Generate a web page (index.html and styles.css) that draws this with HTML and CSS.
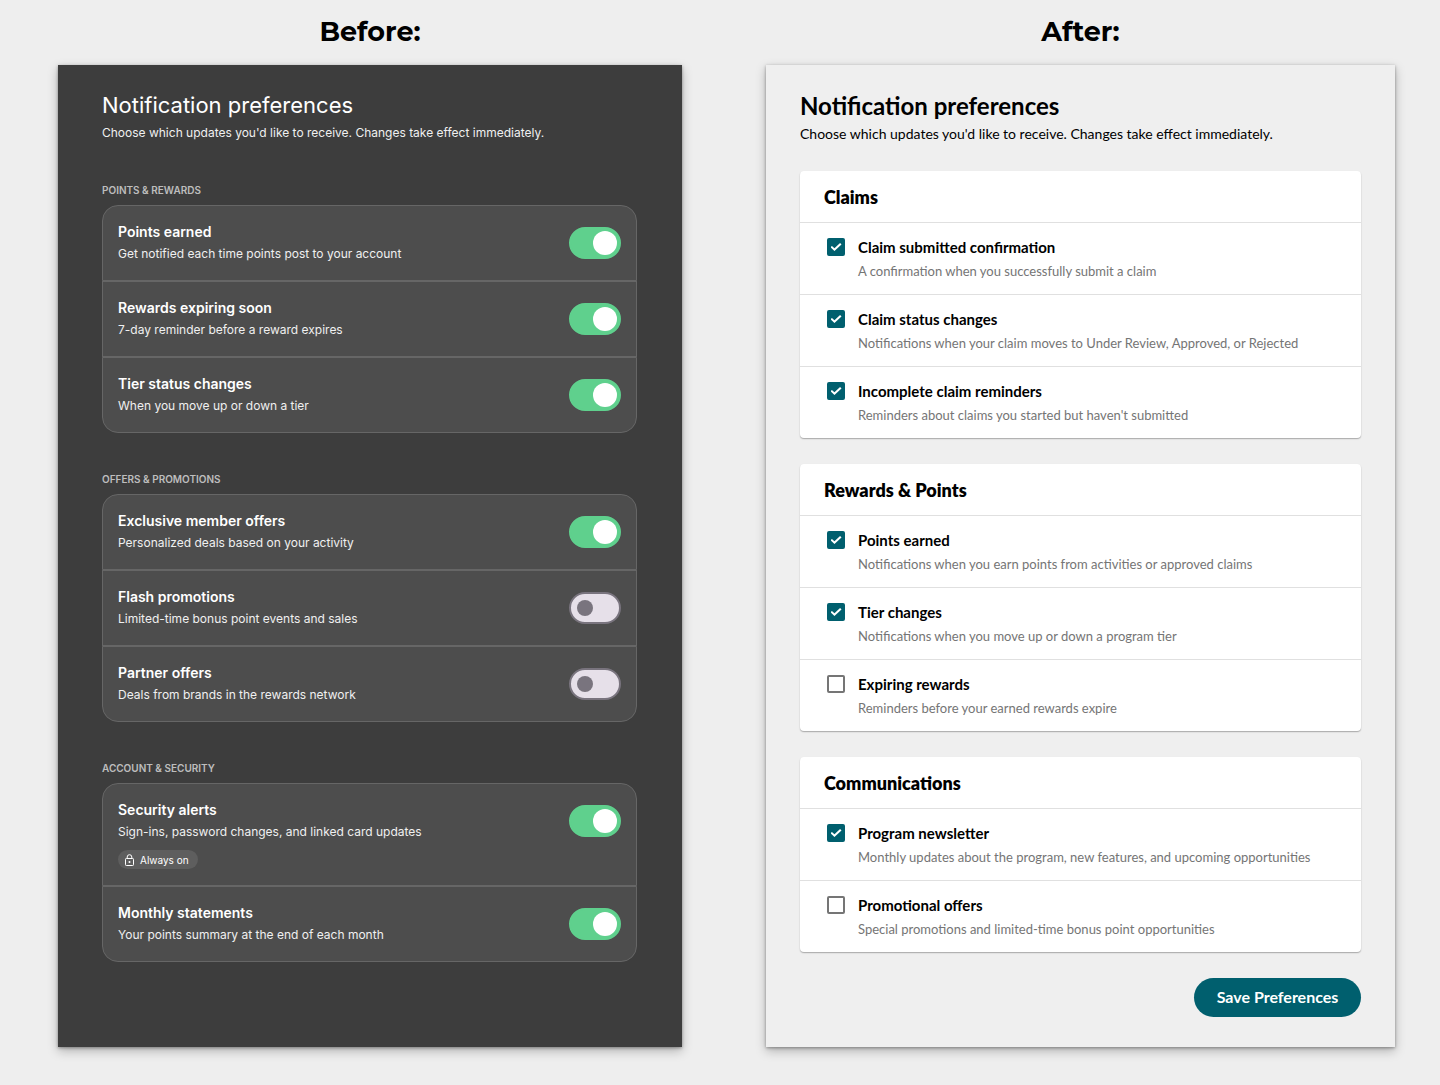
FILE: index.html
```html
<!DOCTYPE html>
<html lang="en">
<head>
  <meta charset="UTF-8">
  <meta name="viewport" content="width=device-width, initial-scale=1.0">
  <title>Notification preferences</title>
  <link rel="stylesheet" href="styles.css">
</head>
<body>
<main class="compare">
  <div class="column">
    <h1>Before:</h1>
    <section class="panel before">
      <h2>Notification preferences</h2>
      <p class="intro">Choose which updates you'd like to receive. Changes take effect immediately.</p>

      <h3>Points &amp; Rewards</h3>
      <div class="group">
        <div class="row">
          <div class="text">
            <label for="b-points">Points earned</label>
            <p>Get notified each time points post to your account</p>
          </div>
          <input type="checkbox" class="toggle" id="b-points" checked>
        </div>
        <div class="row">
          <div class="text">
            <label for="b-expiring">Rewards expiring soon</label>
            <p>7-day reminder before a reward expires</p>
          </div>
          <input type="checkbox" class="toggle" id="b-expiring" checked>
        </div>
        <div class="row">
          <div class="text">
            <label for="b-tier">Tier status changes</label>
            <p>When you move up or down a tier</p>
          </div>
          <input type="checkbox" class="toggle" id="b-tier" checked>
        </div>
      </div>

      <h3>Offers &amp; Promotions</h3>
      <div class="group">
        <div class="row">
          <div class="text">
            <label for="b-exclusive">Exclusive member offers</label>
            <p>Personalized deals based on your activity</p>
          </div>
          <input type="checkbox" class="toggle" id="b-exclusive" checked>
        </div>
        <div class="row">
          <div class="text">
            <label for="b-flash">Flash promotions</label>
            <p>Limited-time bonus point events and sales</p>
          </div>
          <input type="checkbox" class="toggle" id="b-flash">
        </div>
        <div class="row">
          <div class="text">
            <label for="b-partner">Partner offers</label>
            <p>Deals from brands in the rewards network</p>
          </div>
          <input type="checkbox" class="toggle" id="b-partner">
        </div>
      </div>

      <h3>Account &amp; Security</h3>
      <div class="group">
        <div class="row">
          <div class="text">
            <label for="b-security">Security alerts</label>
            <p>Sign-ins, password changes, and linked card updates</p>
            <span class="badge">
              <svg width="9" height="12" viewBox="0 0 9 12" fill="none" stroke="currentColor">
                <rect x="0.5" y="4.5" width="8" height="7" rx="0.8"/>
                <path d="M2.2 4.5V3a2.3 2.3 0 0 1 4.6 0v1.5"/>
                <circle cx="4.5" cy="8" r="1" fill="currentColor" stroke="none"/>
              </svg>
              Always on
            </span>
          </div>
          <input type="checkbox" class="toggle" id="b-security" checked>
        </div>
        <div class="row">
          <div class="text">
            <label for="b-monthly">Monthly statements</label>
            <p>Your points summary at the end of each month</p>
          </div>
          <input type="checkbox" class="toggle" id="b-monthly" checked>
        </div>
      </div>
    </section>
  </div>

  <div class="column">
    <h1>After:</h1>
    <form class="panel after">
      <h2>Notification preferences</h2>
      <p class="intro">Choose which updates you'd like to receive. Changes take effect immediately.</p>

      <section class="card">
        <h3>Claims</h3>
        <div class="option">
          <input type="checkbox" id="a-submitted" checked>
          <div class="text">
            <label for="a-submitted">Claim submitted confirmation</label>
            <p>A confirmation when you successfully submit a claim</p>
          </div>
        </div>
        <div class="option">
          <input type="checkbox" id="a-status" checked>
          <div class="text">
            <label for="a-status">Claim status changes</label>
            <p>Notifications when your claim moves to Under Review, Approved, or Rejected</p>
          </div>
        </div>
        <div class="option">
          <input type="checkbox" id="a-incomplete" checked>
          <div class="text">
            <label for="a-incomplete">Incomplete claim reminders</label>
            <p>Reminders about claims you started but haven't submitted</p>
          </div>
        </div>
      </section>

      <section class="card">
        <h3>Rewards &amp; Points</h3>
        <div class="option">
          <input type="checkbox" id="a-points" checked>
          <div class="text">
            <label for="a-points">Points earned</label>
            <p>Notifications when you earn points from activities or approved claims</p>
          </div>
        </div>
        <div class="option">
          <input type="checkbox" id="a-tier" checked>
          <div class="text">
            <label for="a-tier">Tier changes</label>
            <p>Notifications when you move up or down a program tier</p>
          </div>
        </div>
        <div class="option">
          <input type="checkbox" id="a-expiring">
          <div class="text">
            <label for="a-expiring">Expiring rewards</label>
            <p>Reminders before your earned rewards expire</p>
          </div>
        </div>
      </section>

      <section class="card">
        <h3>Communications</h3>
        <div class="option">
          <input type="checkbox" id="a-newsletter" checked>
          <div class="text">
            <label for="a-newsletter">Program newsletter</label>
            <p>Monthly updates about the program, new features, and upcoming opportunities</p>
          </div>
        </div>
        <div class="option">
          <input type="checkbox" id="a-promo">
          <div class="text">
            <label for="a-promo">Promotional offers</label>
            <p>Special promotions and limited-time bonus point opportunities</p>
          </div>
        </div>
      </section>

      <button type="submit" class="save">Save Preferences</button>
    </form>
  </div>
</main>
</body>
</html>
```

FILE: styles.css
```css
* {
  box-sizing: border-box;
}
body {
  margin: 0;
  background-color: #eeeeee;
  color: #000000;
  font-family: Lato, sans-serif;
}
h1, h2, h3, p {
  margin: 0;
}
input {
  margin: 0;
  appearance: none;
  flex-shrink: 0;
  cursor: pointer;
}
.compare {
  display: grid;
  grid-template-columns: 624fr 629fr;
  gap: 84px;
  padding: 0 45px 38px 58px;
}
.column {
  display: flex;
  flex-direction: column;
}
h1 {
  height: 65px;
  font-family: Montserrat, Inter, sans-serif;
  font-size: 27px;
  font-weight: 700;
  line-height: 64px;
  text-align: center;
}
.panel {
  flex: 1;
  box-shadow: 0 4px 10px rgba(0, 0, 0, 0.25), 0 1px 3px rgba(0, 0, 0, 0.35);
}

/* Before */
.before {
  padding: 26px 45px 44px 44px;
  background-color: #3d3d3d;
  color: #ffffff;
  font-family: Inter, sans-serif;
}
.before h2 {
  font-size: 22px;
  font-weight: 400;
  line-height: 28px;
}
.before .intro {
  margin-top: 6px;
  font-size: 12px;
  line-height: 16px;
  color: #f0f0f0;
}
.before h3 {
  margin: 40px 0 8px;
  font-size: 10px;
  font-weight: 600;
  line-height: 13px;
  text-transform: uppercase;
  color: #bdbdbd;
}
.before .intro + h3 {
  margin-top: 43px;
}
.group {
  border-radius: 16px;
  overflow: hidden;
  background-color: #4d4d4d;
}
.row {
  display: flex;
  justify-content: space-between;
  padding: 16px 15px;
  border: 1px solid #666666;
}
.row:first-child {
  border-radius: 16px 16px 0 0;
}
.row:last-child {
  border-radius: 0 0 16px 16px;
}
.row label {
  display: block;
  font-size: 14px;
  font-weight: 600;
  line-height: 20px;
}
.row p {
  margin-top: 2px;
  font-size: 12px;
  line-height: 20px;
  color: #f0f0f0;
}
.toggle {
  display: flex;
  align-items: center;
  width: 52px;
  height: 32px;
  margin-top: 5px;
  padding: 0 6px;
  border: 2px solid #79747e;
  border-radius: 16px;
  background-color: #e6e0e9;
}
.toggle::before {
  content: "";
  width: 16px;
  height: 16px;
  border-radius: 50%;
  background-color: #79747e;
}
.toggle:checked {
  justify-content: flex-end;
  padding: 0 2px;
  border-color: #5fd08d;
  background-color: #5fd08d;
}
.toggle:checked::before {
  width: 24px;
  height: 24px;
  background-color: #ffffff;
}
.badge {
  display: inline-flex;
  align-items: center;
  gap: 6px;
  height: 19px;
  margin-top: 8px;
  padding: 0 9px 0 7px;
  border-radius: 10px;
  background-color: #5e5e5e;
  font-size: 10px;
  vertical-align: top;
}

/* After */
.after {
  padding: 26px 34px 30px;
  background-color: #efefef;
}
.after h2 {
  font-size: 24px;
  font-weight: 700;
  line-height: 30px;
}
.after .intro {
  margin: 2px 0 27px;
  font-size: 14px;
  line-height: 21px;
}
.card {
  margin-bottom: 26px;
  border-radius: 4px;
  background-color: #ffffff;
  box-shadow: 0 1px 1px rgba(0, 0, 0, 0.2), 0 1px 2px rgba(0, 0, 0, 0.12);
}
.card h3 {
  padding: 14px 24px 13px;
  font-size: 18px;
  font-weight: 800;
  line-height: 24px;
}
.option {
  display: flex;
  gap: 13px;
  padding: 12px 24px 11px 27px;
  border-top: 1px solid #e0e0e0;
}
.option input {
  display: flex;
  align-items: center;
  justify-content: center;
  width: 18px;
  height: 18px;
  margin-top: 3px;
  border: 2px solid #757575;
  border-radius: 2px;
}
.option input:checked {
  border-color: #005f6e;
  background-color: #005f6e;
}
.option input:checked::before {
  content: "";
  width: 11px;
  height: 8px;
  background-color: #ffffff;
  clip-path: polygon(0 54%, 13% 36%, 36% 66%, 87% 0, 100% 18%, 36% 100%);
}
.option label {
  display: block;
  font-size: 15px;
  font-weight: 700;
  line-height: 24px;
}
.option p {
  font-size: 13px;
  line-height: 24px;
  color: #757575;
}
.save {
  display: block;
  min-width: 167px;
  height: 39px;
  margin-left: auto;
  padding: 0 20px 2px;
  border: none;
  border-radius: 20px;
  background-color: #005f6e;
  color: #ffffff;
  font-family: inherit;
  font-size: 16px;
  font-weight: 700;
  cursor: pointer;
}
.save:hover {
  background-color: #004c58;
}
```
